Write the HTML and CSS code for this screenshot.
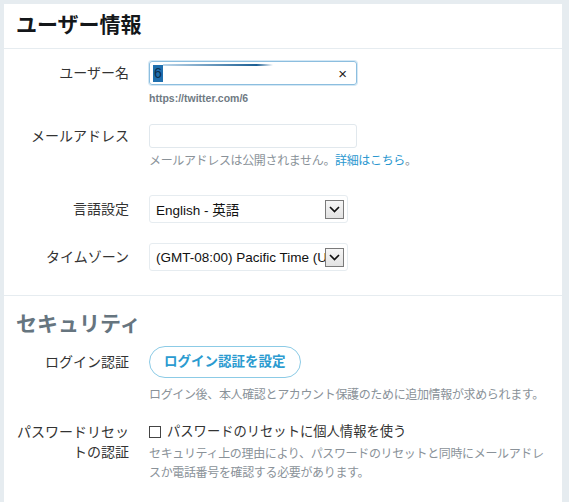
FILE: index.html
```html
<!DOCTYPE html>
<html lang="ja">
<head>
<meta charset="utf-8">
<title>ユーザー情報</title>
<link rel="stylesheet" href="styles.css">
</head>
<body>
<div class="page">
  <div class="card">
    <div class="head"><h1 class="title">ユーザー情報</h1></div>
    <div class="section">
      <div class="row row-user">
        <div class="label lh24">ユーザー名</div>
        <div class="field">
          <div class="input focus"><span class="sel">6</span><span class="redact"></span><span class="clear">×</span></div>
          <div class="url">https://twitter.com/6</div>
        </div>
      </div>
      <div class="row row-mail">
        <div class="label lh24">メールアドレス</div>
        <div class="field">
          <div class="input"></div>
          <div class="help help-mail">メールアドレスは公開されません。<span class="link">詳細はこちら</span>。</div>
        </div>
      </div>
      <div class="row row-lang">
        <div class="label lh28">言語設定</div>
        <div class="field">
          <div class="select"><span class="sel-text">English - 英語</span><span class="arrow"><svg width="11" height="7" viewBox="0 0 11 7"><path d="M1 1 L5.5 5.5 L10 1" fill="none" stroke="#111" stroke-width="1.7"/></svg></span></div>
        </div>
      </div>
      <div class="row row-tz">
        <div class="label lh28">タイムゾーン</div>
        <div class="field">
          <div class="select"><span class="sel-text">(GMT-08:00) Pacific Time (US &amp; Canada)</span><span class="arrow"><svg width="11" height="7" viewBox="0 0 11 7"><path d="M1 1 L5.5 5.5 L10 1" fill="none" stroke="#111" stroke-width="1.7"/></svg></span></div>
        </div>
      </div>
    </div>
    <div class="section section-sec">
      <h2 class="subtitle">セキュリティ</h2>
      <div class="row row-login">
        <div class="label lh32">ログイン認証</div>
        <div class="field">
          <span class="btn">ログイン認証を設定</span>
          <div class="help help-login">ログイン後、本人確認とアカウント保護のために追加情報が求められます。</div>
        </div>
      </div>
      <div class="row row-pw">
        <div class="label lh20">パスワードリセットの認証</div>
        <div class="field">
          <div class="check-line"><span class="box"></span>パスワードのリセットに個人情報を使う</div>
          <div class="help help-pw">セキュリティ上の理由により、パスワードのリセットと同時にメールアドレスか電話番号を確認する必要があります。</div>
        </div>
      </div>
    </div>
  </div>
</div>
</body>
</html>
```

FILE: styles.css
```css
html, body {
  margin: 0;
  padding: 0;
  background: #e6ecf0;
  font-family: "Liberation Sans", "Noto Sans CJK JP", sans-serif;
}

.page {
  padding: 4px 7px 0 4px;
}

.card {
  background: #ffffff;
  height: 498px;
}

.head {
  padding: 9px 12px 11px 12px;
  border-bottom: 1px solid #e6ecf0;
}

.title {
  margin: 0;
  font-size: 21px;
  line-height: 24px;
  font-weight: bold;
  color: #14171a;
}

.section {
  padding-bottom: 24px;
  border-bottom: 1px solid #e6ecf0;
}

.section-sec {
  border-bottom: none;
}

.row {
  display: flex;
  align-items: flex-start;
}

.label {
  flex: none;
  width: 125px;
  text-align: right;
  font-size: 14px;
  color: #333333;
}

.lh20 { line-height: 20px; }
.lh24 { line-height: 24px; }
.lh28 { line-height: 28px; }
.lh32 { line-height: 32px; }

.field {
  margin-left: 20px;
  width: 400px;
}

.row-user { margin-top: 12px; }
.row-mail { margin-top: 19px; }
.row-lang { margin-top: 26px; }
.row-tz { margin-top: 20px; }

.input {
  box-sizing: border-box;
  width: 208px;
  height: 24px;
  border: 1px solid #e1e8ed;
  border-radius: 3px;
  display: flex;
  align-items: center;
  padding: 0 3px;
}

.input.focus {
  border-color: #8cbedf;
  box-shadow: 0 0 0 1px #d4e8f5;
}

.sel {
  font-size: 14px;
  line-height: 17px;
  background: #1f6fae;
  color: #0b2e4c;
  padding: 0 1px;
}

.redact {
  align-self: flex-start;
  margin-top: 2px;
  width: 110px;
  height: 2px;
  background: linear-gradient(to right, #bcd6ea, #1c5f94 85%, #ffffff);
}

.clear {
  margin-left: auto;
  margin-right: 6px;
  font-size: 15px;
  color: #222;
}

.url {
  margin-top: 6px;
  font-size: 10.5px;
  line-height: 14px;
  font-weight: bold;
  color: #6f7a83;
}

.help {
  font-size: 12px;
  letter-spacing: -0.35px;
  color: #8a9299;
}

.help-mail {
  margin-top: 5px;
  line-height: 16px;
}

.link {
  color: #2a97cf;
}

.select {
  box-sizing: border-box;
  width: 199px;
  height: 28px;
  border: 1px solid #e6ecf0;
  border-radius: 3px;
  display: flex;
  align-items: center;
  padding-left: 6px;
  font-size: 13.5px;
  color: #111;
  overflow: hidden;
}

.sel-text {
  flex: 1;
  min-width: 0;
  white-space: nowrap;
  overflow: hidden;
}

.arrow {
  flex: none;
  box-sizing: border-box;
  width: 19px;
  height: 19px;
  margin-right: 3px;
  border: 1px solid #7a7a7a;
  background: linear-gradient(#f6f6f6, #e2e2e2);
  display: flex;
  align-items: center;
  justify-content: center;
}

.subtitle {
  margin: 16px 0 0 0;
  padding-left: 12px;
  font-size: 21px;
  line-height: 24px;
  font-weight: bold;
  color: #66757f;
}

.row-login { margin-top: 10px; }

.btn {
  display: inline-block;
  box-sizing: border-box;
  height: 32px;
  padding: 0 14px;
  border: 1px solid #8ccbe6;
  border-radius: 100px;
  font-size: 13.5px;
  line-height: 30px;
  font-weight: bold;
  color: #2b9bd0;
}

.help-login {
  margin-top: 9px;
  line-height: 16px;
}

.row-pw { margin-top: 19px; }

.check-line {
  font-size: 13.3px;
  line-height: 20px;
  color: #333;
  display: flex;
  align-items: center;
}

.box {
  display: inline-block;
  width: 10px;
  height: 10px;
  border: 1px solid #444;
  margin-right: 6px;
}

.help-pw {
  margin-top: 3px;
  line-height: 19px;
}
```
